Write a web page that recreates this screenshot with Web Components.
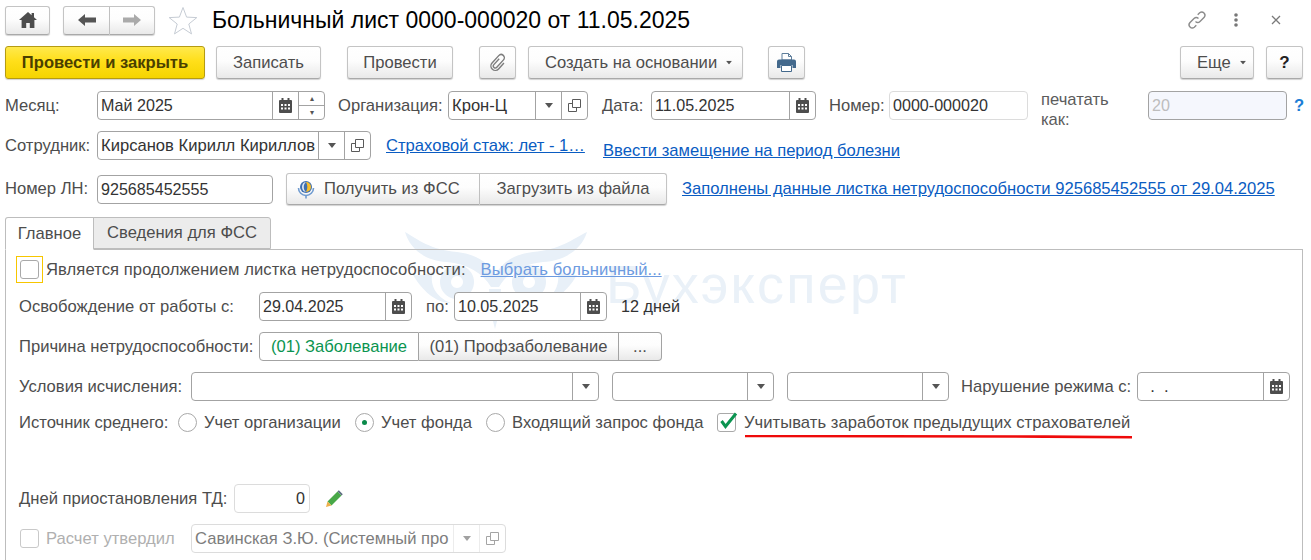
<!DOCTYPE html>
<html lang="ru">
<head>
<meta charset="utf-8">
<title>Больничный лист</title>
<style>
  html, body { margin: 0; height: 560px; overflow: hidden; background: #fff; }
  body { font: 16.6px "Liberation Sans", Arial, sans-serif; color: #333; }
</style>
</head>
<body>
<sick-leave-page></sick-leave-page>
<script>
// Shared icons
const ICONS = {
  home: `<svg width="18" height="16" viewBox="0 0 18 16"><path d="M9 0 0 8h2.6v8h4.6v-5h3.6v5h4.6V8H18l-3-2.7V1h-2.4v2.2z" fill="#4d4d4d"/></svg>`,
  back: `<svg width="18" height="12" viewBox="0 0 18 12"><path d="M0 6 7 0v3.6h11v4.8H7V12z" fill="#555"/></svg>`,
  forward: `<svg width="18" height="12" viewBox="0 0 18 12"><path d="M18 6 11 0v3.6H0v4.8h11V12z" fill="#aaa"/></svg>`,
  star: `<svg width="30" height="29" viewBox="0 0 30 29"><path d="M15 1.5l3.6 9.6 10.2.5-8 6.4 2.7 9.9L15 22.3l-8.5 5.6 2.7-9.9-8-6.4 10.2-.5z" fill="#fff" stroke="#c6ccd4"/></svg>`,
  link: `<svg width="22" height="22" viewBox="0 0 22 22" fill="none" stroke="#8c8c8c" stroke-width="1.4"><path d="M9.5 12.5a3.2 3.2 0 0 0 4.5 0l4.2-4.2a3.2 3.2 0 0 0-4.5-4.5l-2 2"/><path d="M12.5 9.5a3.2 3.2 0 0 0-4.5 0l-4.2 4.2a3.2 3.2 0 0 0 4.5 4.5l2-2"/></svg>`,
  kebab: `<svg width="4" height="14" viewBox="0 0 4 14"><g fill="#777"><circle cx="2" cy="2" r="1.8"/><circle cx="2" cy="7" r="1.8"/><circle cx="2" cy="12" r="1.8"/></g></svg>`,
  close: `<svg width="10" height="10" viewBox="0 0 10 10"><path d="M1 1l8 8M9 1l-8 8" stroke="#7a7a7a" stroke-width="1.3"/></svg>`,
  clip: `<svg width="20" height="20" viewBox="0 0 20 20" fill="none" stroke="#7d7d7d" stroke-width="1.4"><path transform="rotate(42 10 10)" d="M8 6v8a2 2 0 0 0 4 0V4a3.2 3.2 0 0 0-6.400 0V14a4.400 4.400 0 0 0 8.800 0V6"/></svg>`,
  print: `<svg width="19" height="19" viewBox="0 0 19 19"><path d="M5 .5h6.5l3 3V7H5z" fill="#fff" stroke="#5f7f9c"/><path d="M11.5.5v3h3" fill="none" stroke="#5f7f9c"/><path d="M2 6.5h15a2 2 0 0 1 2 2V15h-3.5v-3h-12v3H0V8.500a2 2 0 0 1 2-2z" fill="#43698c"/><path d="M4.500 12.500h10v6h-10z" fill="#fff" stroke="#43698c"/></svg>`,
  calendar: `<svg width="13" height="15" viewBox="0 0 13 15"><path d="M1 2h11a1 1 0 0 1 1 1v11a1 1 0 0 1-1 1H1a1 1 0 0 1-1-1V3a1 1 0 0 1 1-1z" fill="#4d4d4d"/><path d="M2.5 0h2v3h-2zM8.5 0h2v3h-2z" fill="#4d4d4d"/><path d="M2 6h2v2H2zM5.500 6h2v2h-2zM9 6h2v2H9zM2 9.500h2v2H2zM5.500 9.500h2v2h-2zM9 9.500h2v2H9z" fill="#fff"/></svg>`,
  drop: `<svg width="8" height="5" viewBox="0 0 8 5"><path d="M0 0h8L4 5z" fill="#555"/></svg>`,
  open: `<svg width="13" height="13" viewBox="0 0 13 13" fill="none" stroke="#5a5a5a"><path d="M4.5.5h8v8h-8z"/><path d="M4.5 4.5h-4v8h8v-4"/></svg>`,
  fss: `<svg width="20" height="20" viewBox="0 0 20 20"><path d="M2.5 9a7.5 7.5 0 0 0 15 0" fill="none" stroke="#6f9bd0" stroke-width="1.6"/><path d="M10 16.500v3" stroke="#6f9bd0" stroke-width="1.6"/><circle cx="10" cy="8" r="6" fill="#3f6fb0"/><path d="M10 3a5 5 0 0 1 0 10c1.8-3 1.8-7 0-10z" fill="#f6bd2c"/><path d="M10 3c-3 2-3 8 0 10-2.500-.2-4-2.400-4-5s1.500-4.800 4-5z" fill="#dfe8f3"/></svg>`,
  pencil: `<svg width="18" height="18" viewBox="0 0 18 18"><path d="M12.500 1.500l4 4L6.500 15.500l-4-4z" fill="#48a848"/><path d="M12.500 1.500l1.300-1.200 4 4-1.300 1.200z" fill="#5c6d80"/><path d="M2.500 11.500l4 4L1 17z" fill="#eeb04b"/></svg>`,
  check: `<svg width="20" height="20" viewBox="0 0 20 20"><path d="M2.500 10l4 5.500L17 2.500" fill="none" stroke="#0a9450" stroke-width="3"/></svg>`
};

class UiIcon extends HTMLElement {
  connectedCallback() {
    const shadow = this.shadowRoot || this.attachShadow({ mode: "open" });
    shadow.innerHTML = `<style>:host{display:inline-flex;align-items:center;justify-content:center;flex:none}svg{display:block}</style>${ICONS[this.getAttribute("name")] || ""}`;
  }
}

class UiButton extends HTMLElement {
  constructor() {
    super();
    this.attachShadow({ mode: "open" }).innerHTML = `
      <style>
        :host {
          display: inline-flex; align-items: center; justify-content: center; flex: none;
          box-sizing: border-box; height: 33px;
          border: 1px solid #c4c4c4; border-bottom-color: #a9a9a9; border-radius: 3px;
          background: linear-gradient(#fff 0%, #fdfdfd 45%, #e9e9e9 100%);
          box-shadow: 0 1px 1px rgba(0,0,0,.18);
          color: #4d4d4d; white-space: nowrap;
        }
        :host([primary]) {
          background: linear-gradient(#ffe94d 0%, #ffdf1a 45%, #f5d400 100%);
          border-color: #b59b12; color: #4a4000; font-weight: bold;
        }
        :host([dark]) { color: #222; font-weight: bold; font-size: 17px; }
        :host([start]) { justify-content: flex-start; padding-left: 16px; }
      </style>
      <slot></slot>`;
  }
}

class UiField extends HTMLElement {
  constructor() {
    super();
    this.attachShadow({ mode: "open" });
  }
  connectedCallback() {
    const btns = (this.getAttribute("buttons") || "").split(" ").filter(Boolean);
    const cell = (b) => b === "spin"
      ? `<div class="btn spin"><span>▴</span><span>▾</span></div>`
      : `<div class="btn"><ui-icon name="${b}"></ui-icon></div>`;
    this.shadowRoot.innerHTML = `
      <style>
        :host {
          display: inline-flex; flex: none; box-sizing: border-box; height: 29px;
          background: #fff; border: 1px solid #a3a3a3; border-radius: 4px;
          overflow: hidden; color: #333;
        }
        :host([digits]) { font-size: 16.1px; }
        :host([light]) { border-color: #dcdcdc; }
        :host([off]) { border-color: #dcdcdc; color: #7d7d7d; }
        :host([off]) .btn { border-left-color: #dcdcdc; opacity: .55; }
        :host([shade]) { background: #f5f7fd; color: #bdbdbd; }
        .value {
          flex: 1; min-width: 0; padding: 0 3px; line-height: 27px;
          white-space: nowrap; overflow: hidden;
        }
        :host([end]) .value { text-align: right; padding-right: 4px; }
        .btn {
          flex: none; width: 26px; display: flex; align-items: center; justify-content: center;
          border-left: 1px solid #a3a3a3; box-sizing: border-box;
        }
        .spin { flex-direction: column; font-size: 8px; color: #555; }
        .spin span { flex: 1; display: flex; align-items: center; width: 100%; justify-content: center; }
        .spin span + span { border-top: 1px solid #a3a3a3; }
      </style>
      <div class="value">${this.getAttribute("value") || ""}</div>
      ${btns.map(cell).join("")}`;
  }
}

class UiLink extends HTMLElement {
  constructor() {
    super();
    this.attachShadow({ mode: "open" }).innerHTML = `
      <style>
        :host { display: inline-block; flex: none; color: #0a5cc2; text-decoration: underline; white-space: nowrap; }
        :host([faded]) { color: #6d9be0; }
      </style>
      <slot></slot>`;
  }
}

class UiCheck extends HTMLElement {
  constructor() {
    super();
    this.attachShadow({ mode: "open" });
  }
  connectedCallback() {
    this.shadowRoot.innerHTML = `
      <style>
        :host { display: inline-flex; flex: none; position: relative; box-sizing: border-box; width: 19px; height: 19px; background: #fff; border: 1px solid #a9a9a9; border-radius: 3px; }
        :host([off]) { border-color: #c9c9c9; }
        .ring { position: absolute; left: -5px; top: -5px; width: 25px; height: 25px; border: 1px solid #f7c600; }
        ui-icon { position: absolute; left: 1px; top: -3px; }
      </style>
      ${this.hasAttribute("focus") ? `<span class="ring"></span>` : ""}
      ${this.hasAttribute("checked") ? `<ui-icon name="check"></ui-icon>` : ""}`;
  }
}

class UiRadio extends HTMLElement {
  constructor() {
    super();
    this.attachShadow({ mode: "open" }).innerHTML = `
      <style>
        :host { display: inline-flex; align-items: center; justify-content: center; flex: none; box-sizing: border-box; width: 19px; height: 19px; background: #fff; border: 1px solid #a9a9a9; border-radius: 50%; }
        :host([checked])::after { content: ""; width: 5px; height: 5px; border-radius: 50%; background: #0a8a4a; }
      </style>`;
  }
}

class WatermarkLogo extends HTMLElement {
  constructor() {
    super();
    this.attachShadow({ mode: "open" }).innerHTML = `
      <style>
        :host { position: absolute; left: 395px; top: 225px; width: 520px; height: 110px; pointer-events: none; }
        svg { position: absolute; left: 0; top: 0; }
        span { position: absolute; left: 211px; top: 29px; font-size: 54px; line-height: 60px; letter-spacing: 2.2px; color: #eaf1f8; white-space: nowrap; }
      </style>
      <svg width="200" height="110" viewBox="0 0 200 110" fill="#e8f0f8">
        <path d="M10 7C22 14 36 25 62 27 80 29 92 36 100 50 108 36 120 29 138 27 164 25 178 14 192 7 187 24 170 36 148 37 128 39 112 48 104 62H96C88 48 72 39 52 37 30 36 15 24 10 7z"/>
        <path d="M18 50C26 51 30 49 38 47 34 58 40 72 56 78 44 78 30 70 18 50z"/>
        <path d="M182 50C174 51 170 49 162 47 166 58 160 72 144 78 156 78 170 70 182 50z"/>
        <path fill-rule="evenodd" d="M62 40a17 17 0 1 0 .01 0zM62 51a6 6 0 1 1-.01 0z"/>
        <path fill-rule="evenodd" d="M134 40a17 17 0 1 0 .01 0zM134 51a6 6 0 1 1-.01 0z"/>
        <path d="M94 64h12l-2 24-4 16-4-16z"/>
      </svg>
      <span>Бухэксперт</span>`;
  }
}

class SickLeavePage extends HTMLElement {
  constructor() {
    super();
    this.attachShadow({ mode: "open" }).innerHTML = `
      <style>
        :host { display: block; position: relative; height: 560px; overflow: hidden; box-sizing: border-box; padding: 5px 8px 0 5px; color: #4d4d4d; }
        .content { position: relative; }
        .row { display: flex; align-items: center; height: 29px; white-space: nowrap; }
        .row > * { flex: none; }
        .title-row { height: 30px; }
        .toolbar { height: 33px; margin-top: 11px; }
        .row > .spacer { flex: 1; }
        h1 { margin: 0 0 0 14px; font-size: 23px; font-weight: normal; color: #000; }
        .group { display: inline-flex; flex: none; }
        .title-row ui-button { height: 29px; }
        .group ui-button:first-child { border-radius: 3px 0 0 3px; }
        .group ui-button:last-child { border-radius: 0 3px 3px 0; border-left: 0; }
        .top-icon { width: 37px; }
        .print-as { align-self: flex-start; margin: -1px 0 0 13px; width: 90px; line-height: 20px; white-space: normal; height: 40px; color: #5c5c5c; }
        .help { color: #1c7ed6; font-weight: bold; margin-left: 7px; }
        .tabs { display: flex; margin-top: 12px; height: 32px; position: relative; z-index: 1; }
        .tab { box-sizing: border-box; display: flex; align-items: center; justify-content: center; height: 33px; border: 1px solid #bdbdbd; color: #4d4d4d; }
        .tab.on { width: 89px; background: #fff; border-bottom-color: #fff; border-radius: 3px 0 0 0; }
        .tab.off { width: 178px; height: 32px; margin-left: -1px; background: #ececec; border-radius: 0 3px 0 0; }
        .panel { position: relative; box-sizing: border-box; height: 320px; border: 1px solid #bdbdbd; padding: 6px 0 0 13px; }
        .panel .row + .row { margin-top: 11px; }
        .seg ui-button { height: 29px; box-shadow: none; border-color: #a3a3a3; }
        .seg ui-button:first-child { background: #fff; color: #0a9450; border-radius: 4px 0 0 4px; }
        .seg ui-button:not(:first-child) { border-left: 0; border-radius: 0; }
        .seg ui-button:last-child { border-radius: 0 4px 4px 0; }
        .muted { color: #b0b0b0; }
        .red-line { position: absolute; left: 739px; top: 185px; }
      </style>
      <watermark-logo></watermark-logo>
      <div class="content">
        <div class="row title-row">
          <ui-button style="width:45px"><ui-icon name="home"></ui-icon></ui-button>
          <div class="group" style="margin-left:13px">
            <ui-button style="width:47px"><ui-icon name="back"></ui-icon></ui-button>
            <ui-button style="width:45px"><ui-icon name="forward"></ui-icon></ui-button>
          </div>
          <ui-icon name="star" style="margin-left:13px"></ui-icon>
          <h1>Больничный лист 0000-000020 от 11.05.2025</h1>
          <span class="spacer"></span>
          <ui-icon name="link" style="margin-right:26px"></ui-icon>
          <ui-icon name="kebab" style="margin-right:33px"></ui-icon>
          <ui-icon name="close" style="margin-right:22px"></ui-icon>
        </div>

        <div class="row toolbar">
          <ui-button primary style="width:200px">Провести и закрыть</ui-button>
          <ui-button style="width:105px;margin-left:11px">Записать</ui-button>
          <ui-button style="width:106px;margin-left:26px">Провести</ui-button>
          <ui-button class="top-icon" style="margin-left:26px"><ui-icon name="clip"></ui-icon></ui-button>
          <ui-button start style="width:215px;margin-left:12px">Создать на основании<ui-icon name="drop" style="margin-left:8px;transform:scale(.75)"></ui-icon></ui-button>
          <ui-button class="top-icon" style="margin-left:25px"><ui-icon name="print"></ui-icon></ui-button>
          <span class="spacer"></span>
          <ui-button start style="width:74px">Еще<ui-icon name="drop" style="margin-left:8px;transform:scale(.75)"></ui-icon></ui-button>
          <ui-button dark class="top-icon" style="margin-left:12px">?</ui-button>
        </div>

        <div class="row" style="margin-top:12px">
          <span style="width:92px">Месяц:</span>
          <ui-field digits style="width:228px" value="Май 2025" buttons="calendar spin"></ui-field>
          <span style="margin-left:13px;width:110px">Организация:</span>
          <ui-field style="width:140px" value="Крон-Ц" buttons="drop open"></ui-field>
          <span style="margin-left:14px;width:49px">Дата:</span>
          <ui-field digits style="width:165px" value="11.05.2025" buttons="calendar"></ui-field>
          <span style="margin-left:13px;width:60px">Номер:</span>
          <ui-field digits light style="width:139px" value="0000-000020"></ui-field>
          <span class="print-as">печатать как:</span>
          <ui-field digits shade style="width:139px;margin-left:17px" value="20"></ui-field>
          <span class="help">?</span>
        </div>

        <div class="row" style="margin-top:11px">
          <span style="width:92px">Сотрудник:</span>
          <ui-field style="width:274px" value="Кирсанов Кирилл Кириллов" buttons="drop open"></ui-field>
          <ui-link style="margin-left:15px;width:201px">Страховой стаж: лет - 1…</ui-link>
          <ui-link style="margin:10px 0 0 16px">Ввести замещение на период болезни</ui-link>
        </div>

        <div class="row" style="margin-top:13px;height:32px">
          <span style="width:92px">Номер ЛН:</span>
          <ui-field digits style="width:176px" value="925685452555"></ui-field>
          <div class="group" style="margin-left:13px">
            <ui-button start style="width:194px;height:32px;padding-left:9px"><ui-icon name="fss" style="margin-right:8px"></ui-icon>Получить из ФСС</ui-button>
            <ui-button style="width:187px;height:32px">Загрузить из файла</ui-button>
          </div>
          <ui-link style="margin-left:15px">Заполнены данные листка нетрудоспособности 925685452555 от 29.04.2025</ui-link>
        </div>

        <div class="tabs">
          <div class="tab on">Главное</div>
          <div class="tab off">Сведения для ФСС</div>
        </div>

        <div class="panel">
          <div class="row" style="height:27px">
            <ui-check focus style="margin:0 0 0 1px"></ui-check>
            <span style="margin-left:7px;letter-spacing:.08px">Является продолжением листка нетрудоспособности:</span>
            <ui-link faded style="margin-left:15px;letter-spacing:.08px">Выбрать больничный...</ui-link>
          </div>
          <div class="row" style="margin-top:9px">
            <span style="width:240px">Освобождение от работы с:</span>
            <ui-field digits style="width:153px" value="29.04.2025" buttons="calendar"></ui-field>
            <span style="width:28px;margin-left:14px">по:</span>
            <ui-field digits style="width:153px" value="10.05.2025" buttons="calendar"></ui-field>
            <span style="margin-left:14px;color:#333;font-size:16.2px">12 дней</span>
          </div>
          <div class="row">
            <span style="width:240px">Причина нетрудоспособности:</span>
            <div class="group seg">
              <ui-button style="width:160px">(01) Заболевание</ui-button>
              <ui-button style="width:200px">(01) Профзаболевание</ui-button>
              <ui-button style="width:43px">...</ui-button>
            </div>
          </div>
          <div class="row">
            <span style="width:172px">Условия исчисления:</span>
            <ui-field style="width:408px" buttons="drop"></ui-field>
            <ui-field style="width:162px;margin-left:13px" buttons="drop"></ui-field>
            <ui-field style="width:162px;margin-left:13px" buttons="drop"></ui-field>
            <span style="margin-left:12px;width:176px">Нарушение режима с:</span>
            <ui-field style="width:153px" value="&nbsp;&nbsp;.&nbsp;&nbsp;." buttons="calendar"></ui-field>
          </div>
          <div class="row" style="margin-top:8px;height:27px">
            <span style="width:159px">Источник среднего:</span>
            <ui-radio></ui-radio><span style="margin-left:7px;width:151px">Учет организации</span>
            <ui-radio checked></ui-radio><span style="margin-left:7px;width:105px">Учет фонда</span>
            <ui-radio></ui-radio><span style="margin-left:7px;width:205px">Входящий запрос фонда</span>
            <ui-check checked></ui-check><span style="margin-left:8px;letter-spacing:.04px">Учитывать заработок предыдущих страхователей</span>
          </div>
          <div class="row" style="margin-top:48px">
            <span style="width:215px">Дней приостановления ТД:</span>
            <ui-field light end digits style="width:76px" value="0"></ui-field>
            <ui-icon name="pencil" style="margin-left:15px"></ui-icon>
          </div>
          <div class="row">
            <ui-check off style="margin-left:1px"></ui-check>
            <span class="muted" style="margin-left:7px;width:145px">Расчет утвердил</span>
            <ui-field off style="width:315px" value="Савинская З.Ю. (Системный про" buttons="drop open"></ui-field>
          </div>
          <svg class="red-line" width="388" height="5" viewBox="0 0 388 5"><path d="M0 1 140 1.3 300 1.6 387 2.3" fill="none" stroke="#ee0a0a" stroke-width="2.6"/></svg>
        </div>
      </div>`;
  }
}

customElements.define("ui-icon", UiIcon);
customElements.define("ui-button", UiButton);
customElements.define("ui-field", UiField);
customElements.define("ui-link", UiLink);
customElements.define("ui-check", UiCheck);
customElements.define("ui-radio", UiRadio);
customElements.define("watermark-logo", WatermarkLogo);
customElements.define("sick-leave-page", SickLeavePage);
</script>
</body>
</html>
